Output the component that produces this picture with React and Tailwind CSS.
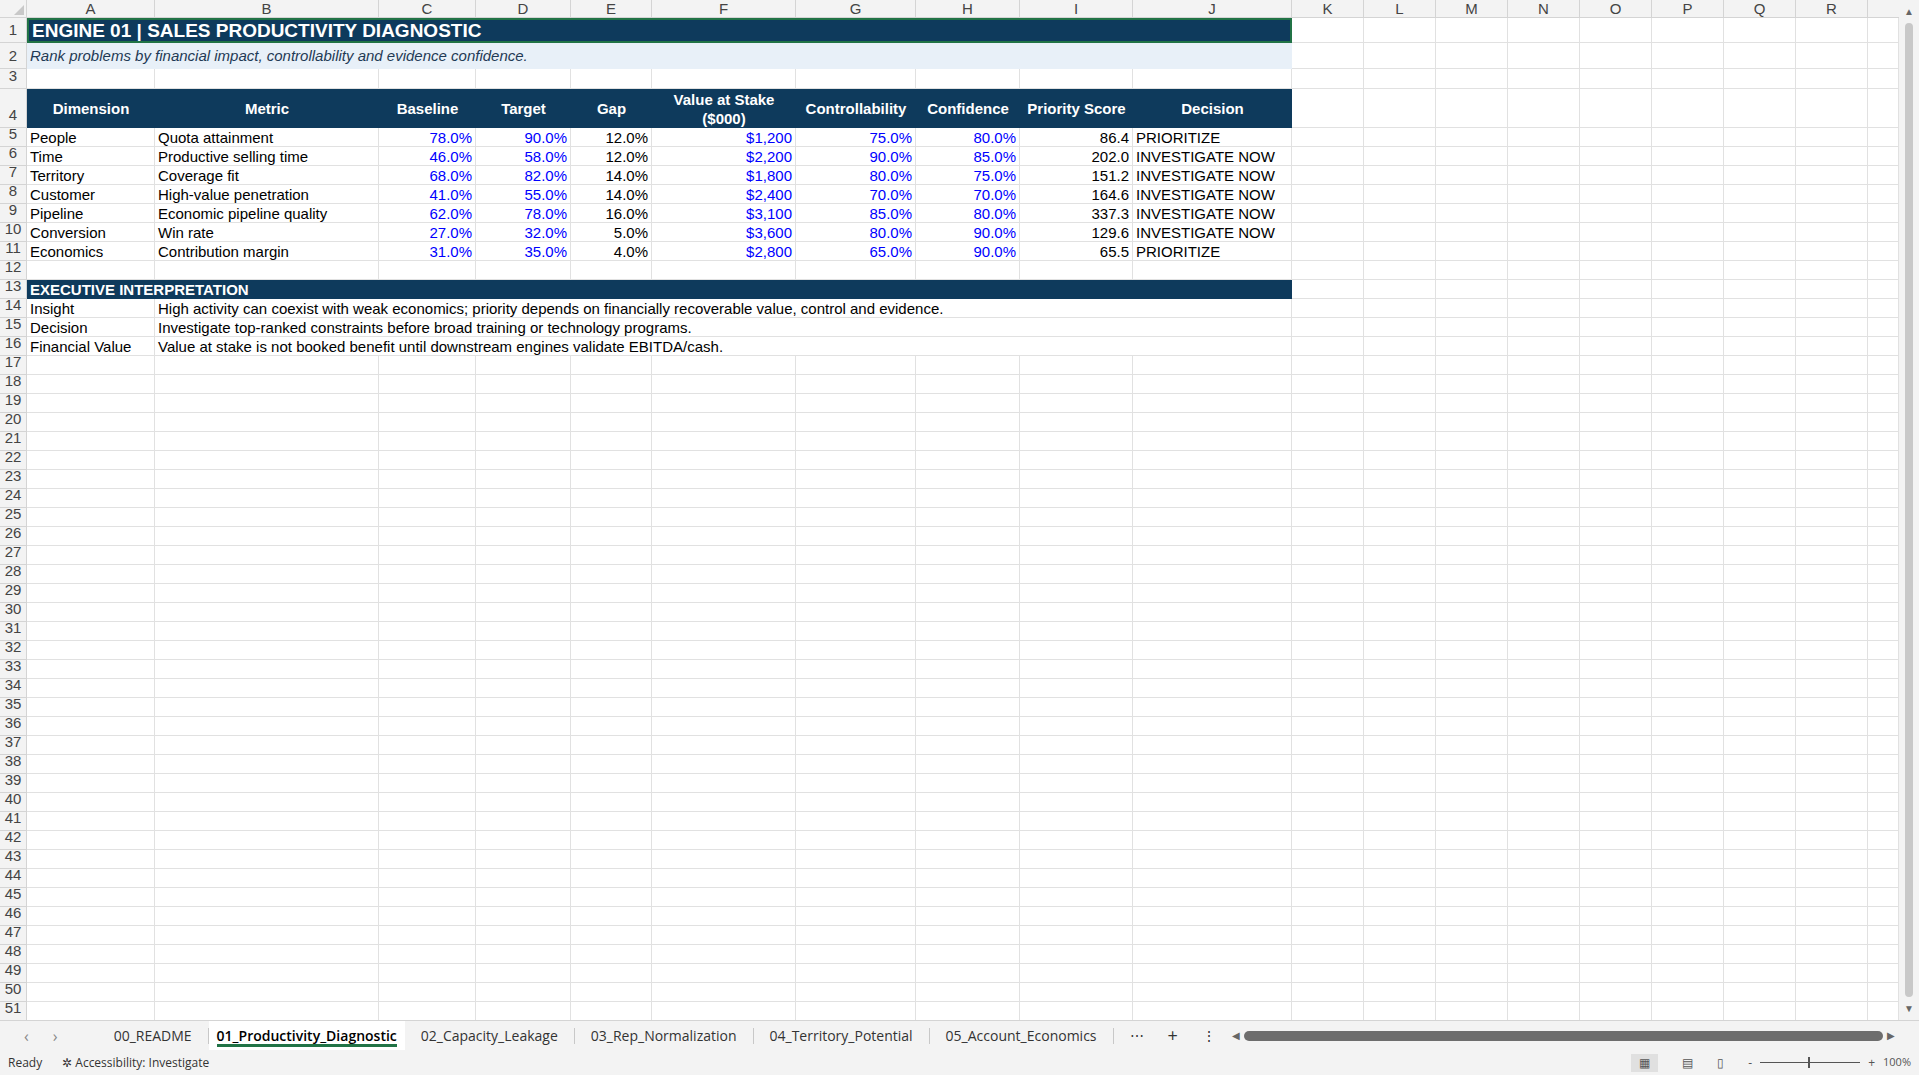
import React from "react";

const cols = [128, 224, 97, 95, 81, 144, 120, 104, 113, 159, 72, 72, 72, 72, 72, 72, 72, 72];
const letters = ["A", "B", "C", "D", "E", "F", "G", "H", "I", "J", "K", "L", "M", "N", "O", "P", "Q", "R"];
const tpl = "27px " + cols.map((c) => c + "px").join(" ") + " 1fr";

const data = [
  ["People", "Quota attainment", "78.0%", "90.0%", "12.0%", "$1,200", "75.0%", "80.0%", "86.4", "PRIORITIZE"],
  ["Time", "Productive selling time", "46.0%", "58.0%", "12.0%", "$2,200", "90.0%", "85.0%", "202.0", "INVESTIGATE NOW"],
  ["Territory", "Coverage fit", "68.0%", "82.0%", "14.0%", "$1,800", "80.0%", "75.0%", "151.2", "INVESTIGATE NOW"],
  ["Customer", "High-value penetration", "41.0%", "55.0%", "14.0%", "$2,400", "70.0%", "70.0%", "164.6", "INVESTIGATE NOW"],
  ["Pipeline", "Economic pipeline quality", "62.0%", "78.0%", "16.0%", "$3,100", "85.0%", "80.0%", "337.3", "INVESTIGATE NOW"],
  ["Conversion", "Win rate", "27.0%", "32.0%", "5.0%", "$3,600", "80.0%", "90.0%", "129.6", "INVESTIGATE NOW"],
  ["Economics", "Contribution margin", "31.0%", "35.0%", "4.0%", "$2,800", "65.0%", "90.0%", "65.5", "PRIORITIZE"],
];
const headers = ["Dimension", "Metric", "Baseline", "Target", "Gap", "Value at Stake ($000)", "Controllability", "Confidence", "Priority Score", "Decision"];
const blue = [2, 3, 5, 6, 7];

const Num = ({ n, h }) => (
  <div className="bg-[#f3f3f3] text-[#444] border-b border-r border-[#d4d4d4] flex items-end justify-center text-[15px] pb-[1px]" style={{ height: h }}>
    {n}
  </div>
);

const Blank = ({ h }) => (
  <div className="border-b border-r border-[#e1e1e1]" style={{ height: h }} />
);

const Blanks = ({ count, h = 19 }) => Array.from({ length: count }).map((_, i) => <Blank key={i} h={h} />);

const App = () => {
  const rows = [];
  rows.push(
    <React.Fragment key={1}>
      <Num n={1} h={25} />
      <div className="col-span-10 bg-[#0e3a5c] text-white font-bold text-[19px] px-[3px] flex items-center border-2 border-[#217346] leading-none">
        ENGINE 01 | SALES PRODUCTIVITY DIAGNOSTIC
      </div>
      <Blanks count={9} h={25} />
    </React.Fragment>
  );
  rows.push(
    <React.Fragment key={2}>
      <Num n={2} h={26} />
      <div className="col-span-10 bg-[#e8f0f8] italic text-[#1f3a55] text-[15px] px-[3px] flex items-center">
        Rank problems by financial impact, controllability and evidence confidence.
      </div>
      <Blanks count={9} h={26} />
    </React.Fragment>
  );
  rows.push(
    <React.Fragment key={3}>
      <Num n={3} h={20} />
      <Blanks count={19} h={20} />
    </React.Fragment>
  );
  rows.push(
    <React.Fragment key={4}>
      <Num n={4} h={39} />
      {headers.map((t) => (
        <div key={t} className="bg-[#0e3a5c] text-white font-bold text-[15px] leading-[19px] flex items-center justify-center text-center px-1">
          {t}
        </div>
      ))}
      <Blanks count={9} h={39} />
    </React.Fragment>
  );
  data.forEach((r, ri) => {
    rows.push(
      <React.Fragment key={5 + ri}>
        <Num n={5 + ri} h={19} />
        {r.map((v, ci) => (
          <div
            key={ci}
            className={
              "h-[19px] border-b border-r border-[#e1e1e1] text-[15px] leading-[19px] px-[3px] whitespace-nowrap " +
              (ci < 2 || ci === 9 ? "text-left " : "text-right ") +
              (blue.includes(ci) ? "text-[#0000ff]" : "text-black")
            }
          >
            {v}
          </div>
        ))}
        <Blanks count={9} />
      </React.Fragment>
    );
  });
  rows.push(
    <React.Fragment key={12}>
      <Num n={12} h={19} />
      <Blanks count={19} />
    </React.Fragment>
  );
  rows.push(
    <React.Fragment key={13}>
      <Num n={13} h={19} />
      <div className="col-span-10 bg-[#0e3a5c] text-white font-bold text-[15px] leading-[19px] px-[3px]">EXECUTIVE INTERPRETATION</div>
      <Blanks count={9} />
    </React.Fragment>
  );
  [
    ["Insight", "High activity can coexist with weak economics; priority depends on financially recoverable value, control and evidence."],
    ["Decision", "Investigate top-ranked constraints before broad training or technology programs."],
    ["Financial Value", "Value at stake is not booked benefit until downstream engines validate EBITDA/cash."],
  ].forEach(([a, b], i) => {
    rows.push(
      <React.Fragment key={14 + i}>
        <Num n={14 + i} h={19} />
        <div className="h-[19px] border-b border-r border-[#e1e1e1] text-[15px] leading-[19px] px-[3px] whitespace-nowrap">{a}</div>
        <div className="col-span-9 h-[19px] border-b border-r border-[#e1e1e1] text-[15px] leading-[19px] px-[3px] whitespace-nowrap">{b}</div>
        <Blanks count={9} />
      </React.Fragment>
    );
  });
  for (let n = 17; n <= 51; n++) {
    rows.push(
      <React.Fragment key={n}>
        <Num n={n} h={19} />
        <Blanks count={19} />
      </React.Fragment>
    );
  }

  const tabs = ["00_README", "01_Productivity_Diagnostic", "02_Capacity_Leakage", "03_Rep_Normalization", "04_Territory_Potential", "05_Account_Economics"];

  return (
    <div className="w-[1919px] h-[1075px] overflow-hidden bg-white flex flex-col" style={{ fontFamily: '"Liberation Sans", Arial, sans-serif' }}>
      <div className="flex flex-1 overflow-hidden">
        <div className="flex-1 overflow-hidden">
          <div className="grid" style={{ gridTemplateColumns: tpl }}>
            <div className="h-[18px] bg-[#f3f3f3] border-b border-r border-[#d4d4d4] relative">
              <div className="absolute right-[2px] bottom-[2px] w-0 h-0 border-l-[10px] border-l-transparent border-b-[10px] border-b-[#c8c8c8]" />
            </div>
            {letters.map((l) => (
              <div key={l} className="h-[18px] bg-[#f3f3f3] border-b border-r border-[#d4d4d4] text-[15px] leading-[18px] text-center text-[#444]">
                {l}
              </div>
            ))}
            <div className="h-[18px] bg-[#f3f3f3] border-b border-[#d4d4d4]" />
            {rows}
          </div>
        </div>
        <div className="w-[20px] bg-[#f3f3f3] flex flex-col items-center py-1 text-[#666] text-[10px]">
          <span>▲</span>
          <div className="w-[8px] flex-1 bg-[#c8c8c8] rounded-full my-1" />
          <span>▼</span>
        </div>
      </div>
      <div className="h-[30px] bg-[#f3f3f3] flex items-end text-[14px] text-[#333] border-t border-[#d4d4d4]" style={{ fontFamily: '"Open Sans", sans-serif' }}>
        <div className="flex items-center gap-6 px-6 h-full text-[#888] text-[16px]">
          <span>‹</span>
          <span>›</span>
        </div>
        <div className="flex items-center h-full ml-4">
          {tabs.map((t, i) =>
            i === 1 ? (
              <div key={t} className="h-full bg-white px-2 flex flex-col justify-center font-semibold relative">
                <span className="text-black">{t}</span>
                <div className="absolute left-2 right-2 bottom-[3px] h-[3px] bg-[#217346]" />
              </div>
            ) : (
              <div key={t} className="px-4 border-r border-[#c8c8c8] leading-[16px]">{t}</div>
            )
          )}
          <span className="px-4">⋯</span>
          <span className="px-2 text-[18px]">+</span>
          <span className="px-4">⋮</span>
        </div>
        <div className="flex items-center h-full flex-1 gap-1 pr-6">
          <span className="text-[10px] text-[#666]">◀</span>
          <div className="flex-1 h-[10px] bg-[#6d6d6d] rounded-full" />
          <span className="text-[10px] text-[#666]">▶</span>
        </div>
      </div>
      <div className="h-[25px] bg-[#f3f3f3] flex items-center text-[12px] text-[#333] px-2" style={{ fontFamily: '"Open Sans", sans-serif' }}>
        <span>Ready</span>
        <span className="ml-5">✲ Accessibility: Investigate</span>
        <div className="ml-auto flex items-center gap-6 text-[#555]">
          <span className="bg-[#e0e0e0] px-2">▦</span>
          <span>▤</span>
          <span>▯</span>
          <div className="flex items-center gap-2">
            <span>-</span>
            <div className="w-[100px] h-[1px] bg-[#555] relative">
              <div className="absolute left-[48px] -top-[5px] w-[2px] h-[11px] bg-[#555]" />
            </div>
            <span>+</span>
            <span className="text-[11px]">100%</span>
          </div>
        </div>
      </div>
    </div>
  );
};

export default App;
